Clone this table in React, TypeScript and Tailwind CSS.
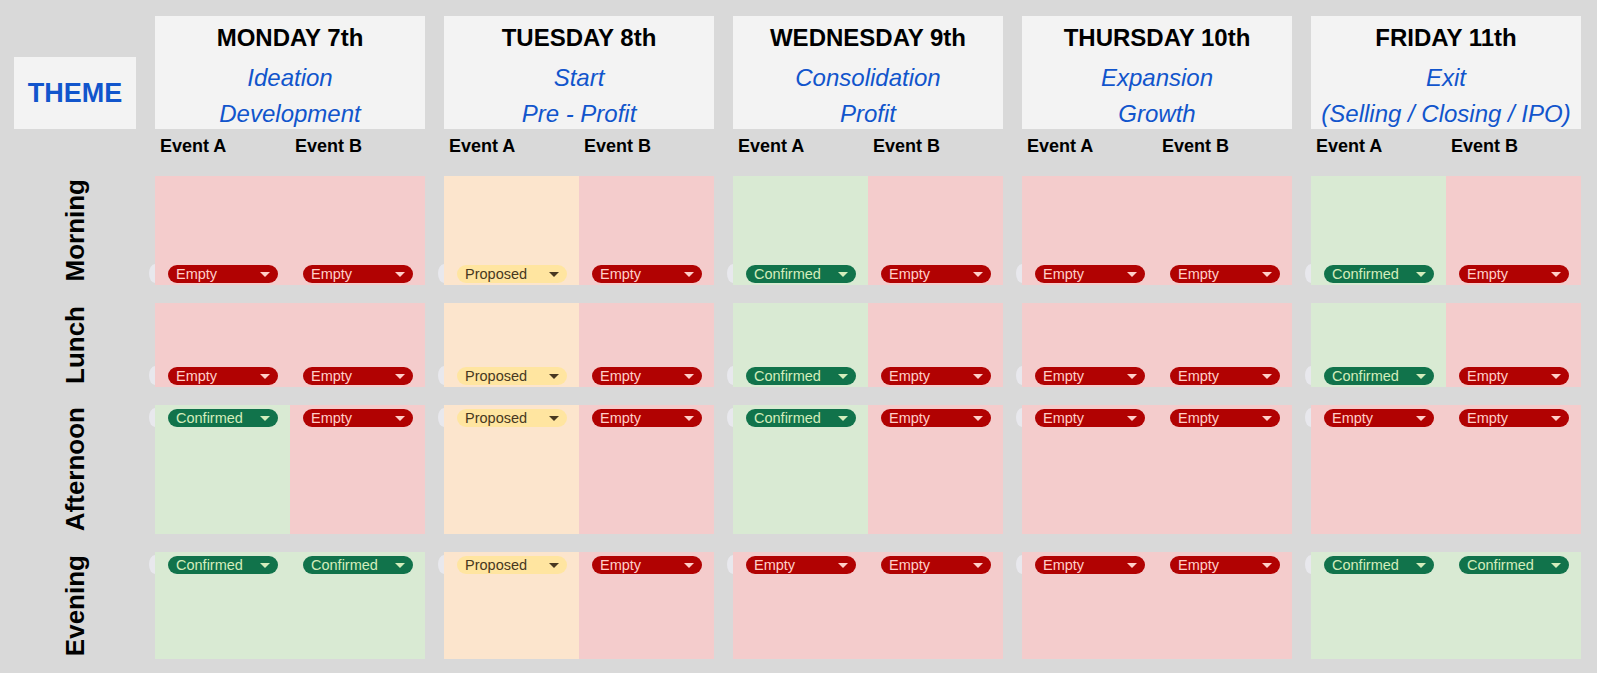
import React from "react";

type Status = "Empty" | "Confirmed" | "Proposed";

const STYLES: Record<Status, { cell: string; badge: string; arrow: string }> = {
  Empty: { cell: "bg-[#f4cccc]", badge: "bg-[#b10202] text-[#ffcfc9]", arrow: "#ffcfc9" },
  Confirmed: { cell: "bg-[#d9ead3]", badge: "bg-[#11734b] text-[#d4edbc]", arrow: "#d4edbc" },
  Proposed: { cell: "bg-[#fce5cd]", badge: "bg-[#ffe5a0] text-[#473821]", arrow: "#473821" },
};

const DAYS: { title: string; l1: string; l2: string; slots: [Status, Status][] }[] = [
  {
    title: "MONDAY 7th",
    l1: "Ideation",
    l2: "Development",
    slots: [
      ["Empty", "Empty"],
      ["Empty", "Empty"],
      ["Confirmed", "Empty"],
      ["Confirmed", "Confirmed"],
    ],
  },
  {
    title: "TUESDAY 8th",
    l1: "Start",
    l2: "Pre - Profit",
    slots: [
      ["Proposed", "Empty"],
      ["Proposed", "Empty"],
      ["Proposed", "Empty"],
      ["Proposed", "Empty"],
    ],
  },
  {
    title: "WEDNESDAY 9th",
    l1: "Consolidation",
    l2: "Profit",
    slots: [
      ["Confirmed", "Empty"],
      ["Confirmed", "Empty"],
      ["Confirmed", "Empty"],
      ["Empty", "Empty"],
    ],
  },
  {
    title: "THURSDAY 10th",
    l1: "Expansion",
    l2: "Growth",
    slots: [
      ["Empty", "Empty"],
      ["Empty", "Empty"],
      ["Empty", "Empty"],
      ["Empty", "Empty"],
    ],
  },
  {
    title: "FRIDAY 11th",
    l1: "Exit",
    l2: "(Selling / Closing / IPO)",
    slots: [
      ["Confirmed", "Empty"],
      ["Confirmed", "Empty"],
      ["Empty", "Empty"],
      ["Confirmed", "Confirmed"],
    ],
  },
];

const ROWS: { name: string; h: string; bottom: boolean }[] = [
  { name: "Morning", h: "h-[109px]", bottom: true },
  { name: "Lunch", h: "h-[84px]", bottom: true },
  { name: "Afternoon", h: "h-[129px]", bottom: false },
  { name: "Evening", h: "h-[107px]", bottom: false },
];

function Badge({ status, first }: { status: Status; first: boolean }) {
  const s = STYLES[status];
  return (
    <div className="relative ml-[13px]">
      {first && (
        <div className="absolute left-[-19px] top-[-1px] w-[6px] h-[19px] rounded-l-[100%_50%] bg-[#e8e8ed]" />
      )}
      <div
        className={`flex items-center justify-between w-[110px] h-[18px] rounded-full pl-[8px] pr-[8px] text-[14.5px] leading-[18px] ${s.badge}`}
      >
        <span>{status}</span>
        <svg width="10" height="5" viewBox="0 0 10 5">
          <path d="M0 0H10L5 5Z" fill={s.arrow} />
        </svg>
      </div>
    </div>
  );
}

export default function App() {
  return (
    <div className="w-[1597px] h-[673px] bg-[#d9d9d9] pt-[16px] pl-[14px] overflow-hidden font-['Liberation_Sans',Arial,sans-serif]">
      {/* Header row */}
      <div className="flex gap-[19px] h-[113px]">
        <div className="w-[122px] flex items-end">
          <div className="w-[122px] h-[72px] bg-[#f3f3f3] flex items-center justify-center text-[27px] font-bold text-[#1155cc]">
            THEME
          </div>
        </div>
        {DAYS.map((d) => (
          <div key={d.title} className="w-[270px] h-[113px] bg-[#f3f3f3] pt-[4px] text-center whitespace-nowrap">
            <div className="text-[24px] leading-[36px] font-bold text-black">{d.title}</div>
            <div className="mt-[4px] text-[24px] leading-[35.7px] italic text-[#1155cc]">{d.l1}</div>
            <div className="text-[24px] leading-[35.7px] italic text-[#1155cc]">{d.l2}</div>
          </div>
        ))}
      </div>
      {/* Event labels */}
      <div className="flex gap-[19px] h-[47px]">
        <div className="w-[122px]" />
        {DAYS.map((d) => (
          <div key={d.title} className="w-[270px] flex">
            <div className="w-[135px] pl-[5px] pt-[7px] text-[18px] leading-[20px] font-bold text-black">Event A</div>
            <div className="w-[135px] pl-[5px] pt-[7px] text-[18px] leading-[20px] font-bold text-black">Event B</div>
          </div>
        ))}
      </div>
      {/* Slot rows */}
      <div className="flex flex-col gap-[18px]">
        {ROWS.map((r, ri) => (
          <div key={r.name} className={`flex gap-[19px] ${r.h}`}>
            <div className="w-[122px] flex items-center justify-center">
              <div className="[writing-mode:vertical-rl] rotate-180 text-[26px] font-bold text-black leading-[30px]">
                {r.name}
              </div>
            </div>
            {DAYS.map((d) => (
              <div key={d.title} className="w-[270px] flex">
                {d.slots[ri].map((st, ci) => (
                  <div
                    key={ci}
                    className={`w-[135px] flex ${STYLES[st].cell} ${r.bottom ? "items-end pb-[2px]" : "items-start pt-[4px]"}`}
                  >
                    <Badge status={st} first={ci === 0} />
                  </div>
                ))}
              </div>
            ))}
          </div>
        ))}
      </div>
    </div>
  );
}
